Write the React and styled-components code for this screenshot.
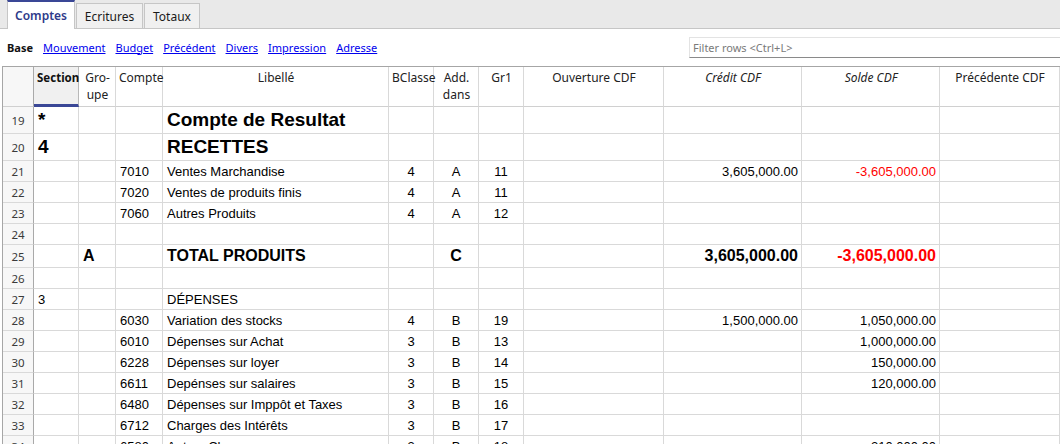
import React from "react";
import styled, { createGlobalStyle, css } from "styled-components";

const GlobalStyle = createGlobalStyle`
  html, body { margin: 0; padding: 0; background: #fff; }
  body { width: 1060px; height: 444px; overflow: hidden; }
  #root { width: 1060px; height: 444px; overflow: hidden; }
  * { box-sizing: border-box; }
`;

const UI_FONT = `"Noto Sans", "Open Sans", sans-serif`;
const CELL_FONT = `"Liberation Sans", Arial, sans-serif`;
const COLS = "31px 45px 37px 47px 226px 45px 45px 45px 140px 138px 138px 1fr";

const Page = styled.div`
  display: flex;
  flex-direction: column;
  width: 1060px;
  height: 444px;
  overflow: hidden;
  font-family: ${UI_FONT};
  & > * { flex-shrink: 0; }
`;

const TabBar = styled.div`
  display: flex;
  align-items: flex-end;
  height: 29px;
  padding-left: 7px;
  background: #e9e9e9;
  border-bottom: 1px solid #c6c6c6;
`;

const Tab = styled.div`
  display: flex;
  align-items: center;
  justify-content: center;
  font-size: 12px;
  color: #1a1a1a;
  background: #f0f0f0;
  border: 1px solid #c6c6c6;
  border-bottom: none;
  height: 25px;
  width: ${(p) => p.w}px;
  margin-right: 1px;
  ${(p) =>
    p.active &&
    css`
      height: 29px;
      margin-bottom: -1px;
      background: #fff;
      border-top: 2px solid #3a4796;
      color: #2e3a8a;
      font-weight: 600;
      padding-bottom: 1px;
    `}
`;

const Toolbar = styled.div`
  display: flex;
  align-items: center;
  height: 37px;
  padding: 0 0 1px 7px;
`;

const Views = styled.div`
  display: flex;
  gap: 10px;
  font-size: 11px;
  flex: 1;
`;

const ViewLabel = styled.span`
  font-weight: 700;
  color: #111;
`;

const ViewLink = styled.a`
  color: #0000ee;
  text-decoration: underline;
  cursor: pointer;
`;

const Filter = styled.div`
  width: 371px;
  height: 21px;
  display: flex;
  align-items: center;
  padding-left: 3px;
  font-size: 11px;
  color: #7a7a7a;
  border: 1px solid #e3e3e3;
  border-bottom: 1px solid #8a8a8a;
  border-right: none;
`;

const Table = styled.div`
  margin-left: 2px;
  border-left: 1px solid #a6a6a6;
  border-top: 1px solid #a6a6a6;
`;

const Row = styled.div`
  display: grid;
  grid-template-columns: ${COLS};
  height: ${(p) => p.h}px;
`;

const Cell = styled.div`
  display: flex;
  align-items: center;
  justify-content: ${(p) =>
    p.align === "right" ? "flex-end" : p.align === "center" ? "center" : "flex-start"};
  padding: 0 ${(p) => (p.align === "right" ? 3 : 4)}px 0 4px;
  border-right: 1px solid #d9d9d9;
  border-bottom: 1px solid #d9d9d9;
  font-family: ${CELL_FONT};
  font-size: ${(p) => p.size || 13}px;
  font-weight: ${(p) => (p.bold ? 700 : 400)};
  color: ${(p) => (p.red ? "#ff0000" : "#000")};
  white-space: nowrap;
  overflow: hidden;
`;

const RowNum = styled.div`
  display: flex;
  align-items: center;
  justify-content: center;
  background: #f7f7f7;
  border-right: 1px solid #a9a9a9;
  border-bottom: 1px solid #d9d9d9;
  font-family: ${UI_FONT};
  font-size: 11.5px;
  color: #3a3a3a;
`;

const HeadCell = styled.div`
  display: flex;
  justify-content: ${(p) => (p.align === "left" ? "flex-start" : "center")};
  text-align: ${(p) => (p.align === "left" ? "left" : "center")};
  align-items: flex-start;
  padding: 2px 2px 0 3px;
  border-right: 1px solid #d9d9d9;
  border-bottom: 1px solid #d0d0d0;
  font-family: ${UI_FONT};
  font-size: 12px;
  line-height: 17px;
  color: #222;
  font-style: ${(p) => (p.italic ? "italic" : "normal")};
  ${(p) =>
    p.sorted &&
    css`
      background: #f0f0f0;
      font-weight: 700;
      color: #111;
      font-size: 11.5px;
      border-right-color: #b8b8b8;
      border-bottom: 3px solid #3a4796;
    `}
`;

const HeadCorner = styled.div`
  background: #f7f7f7;
  border-right: 1px solid #a9a9a9;
  border-bottom: 1px solid #d0d0d0;
`;

const headers = [
  { t: "Section", align: "left", sorted: true },
  { t: ["Gro-", "upe"] },
  { t: "Compte", align: "left" },
  { t: "Libellé" },
  { t: "BClasse", align: "left" },
  { t: ["Add.", "dans"] },
  { t: "Gr1" },
  { t: "Ouverture CDF" },
  { t: "Crédit CDF", italic: true },
  { t: "Solde CDF", italic: true },
  { t: "Précédente CDF" },
];

const rows = [
  { n: 19, h: 27, section: "*", lib: "Compte de Resultat", big: 19, bold: true },
  { n: 20, h: 27, section: "4", lib: "RECETTES", big: 19, bold: true },
  { n: 21, h: 21, compte: "7010", lib: "Ventes Marchandise", bc: "4", add: "A", gr: "11", credit: "3,605,000.00", solde: "-3,605,000.00", red: true },
  { n: 22, h: 21, compte: "7020", lib: "Ventes de produits finis", bc: "4", add: "A", gr: "11" },
  { n: 23, h: 21, compte: "7060", lib: "Autres Produits", bc: "4", add: "A", gr: "12" },
  { n: 24, h: 21 },
  { n: 25, h: 23, groupe: "A", lib: "TOTAL PRODUITS", add: "C", credit: "3,605,000.00", solde: "-3,605,000.00", red: true, big: 16, bold: true },
  { n: 26, h: 21 },
  { n: 27, h: 21, section: "3", lib: "DÉPENSES" },
  { n: 28, h: 21, compte: "6030", lib: "Variation des stocks", bc: "4", add: "B", gr: "19", credit: "1,500,000.00", solde: "1,050,000.00" },
  { n: 29, h: 21, compte: "6010", lib: "Dépenses sur Achat", bc: "3", add: "B", gr: "13", solde: "1,000,000.00" },
  { n: 30, h: 21, compte: "6228", lib: "Dépenses sur loyer", bc: "3", add: "B", gr: "14", solde: "150,000.00" },
  { n: 31, h: 21, compte: "6611", lib: "Depénses sur salaires", bc: "3", add: "B", gr: "15", solde: "120,000.00" },
  { n: 32, h: 21, compte: "6480", lib: "Dépenses sur Imppôt et Taxes", bc: "3", add: "B", gr: "16" },
  { n: 33, h: 21, compte: "6712", lib: "Charges des Intérêts", bc: "3", add: "B", gr: "17" },
  { n: 34, h: 21, compte: "6580", lib: "Autres Charges", bc: "3", add: "B", gr: "18", solde: "210,000.00" },
];

const links = ["Mouvement", "Budget", "Précédent", "Divers", "Impression", "Adresse"];

function DataRow({ r }) {
  const size = r.big;
  const b = r.bold;
  return (
    <Row h={r.h}>
      <RowNum>{r.n}</RowNum>
      <Cell size={size} bold={b}>{r.section}</Cell>
      <Cell size={size} bold={b}>{r.groupe}</Cell>
      <Cell>{r.compte}</Cell>
      <Cell size={size} bold={b}>{r.lib}</Cell>
      <Cell align="center">{r.bc}</Cell>
      <Cell align="center" size={size} bold={b}>{r.add}</Cell>
      <Cell align="center">{r.gr}</Cell>
      <Cell align="right" />
      <Cell align="right" size={size} bold={b}>{r.credit}</Cell>
      <Cell align="right" size={size} bold={b} red={r.red}>{r.solde}</Cell>
      <Cell align="right" />
    </Row>
  );
}

export default function App() {
  return (
    <Page>
      <GlobalStyle />
      <TabBar>
        <Tab active w={68}>Comptes</Tab>
        <Tab w={67}>Ecritures</Tab>
        <Tab w={56}>Totaux</Tab>
      </TabBar>
      <Toolbar>
        <Views>
          <ViewLabel>Base</ViewLabel>
          {links.map((l) => (
            <ViewLink key={l}>{l}</ViewLink>
          ))}
        </Views>
        <Filter>Filter rows &lt;Ctrl+L&gt;</Filter>
      </Toolbar>
      <Table>
        <Row h={40}>
          <HeadCorner />
          {headers.map((h, i) => (
            <HeadCell key={i} align={h.align} sorted={h.sorted} italic={h.italic}>
              {Array.isArray(h.t) ? (
                <span>
                  {h.t[0]}
                  <br />
                  {h.t[1]}
                </span>
              ) : (
                h.t
              )}
            </HeadCell>
          ))}
        </Row>
        {rows.map((r) => (
          <DataRow key={r.n} r={r} />
        ))}
      </Table>
    </Page>
  );
}
